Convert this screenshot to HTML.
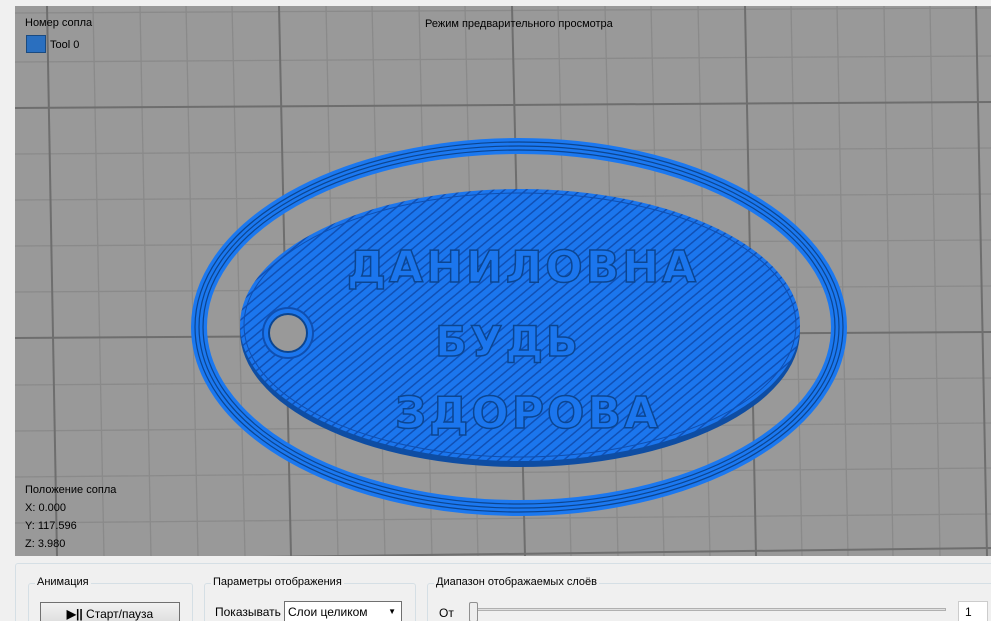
<!DOCTYPE html>
<html><head><meta charset="utf-8">
<style>
html,body{margin:0;width:991px;height:621px;overflow:hidden}
body{background:#f0f0f0;font-family:"Liberation Sans",sans-serif;font-size:11px;color:#000;position:relative}
.a{position:absolute}
.gb{position:absolute;border:1px solid #d5dfe5;border-radius:3px;}
.gt{position:absolute;background:#f0f0f0;padding:0 2px;top:-8px;left:6px;white-space:nowrap}
</style></head><body>
<svg class="a" style="left:15px;top:6px" width="976" height="550" viewBox="15 6 976 550">
<defs>
<pattern id="st" width="7" height="7" patternUnits="userSpaceOnUse" patternTransform="rotate(-40)">
<rect width="7" height="7" fill="#1b76ee"/><rect width="7" height="1.5" fill="#1050b5"/>
</pattern>
</defs>
<rect x="15" y="6" width="976" height="550" fill="#999999"/>
<g stroke="#8a8a8a" stroke-width="1.3">
<line x1="93" y1="6" x2="104" y2="556"/><line x1="140" y1="6" x2="151" y2="556"/><line x1="186" y1="6" x2="198" y2="556"/><line x1="232" y1="6" x2="245" y2="556"/>
<line x1="326" y1="6" x2="338" y2="556"/><line x1="372" y1="6" x2="385" y2="556"/><line x1="419" y1="6" x2="432" y2="556"/><line x1="465" y1="6" x2="478" y2="556"/>
<line x1="558" y1="6" x2="571" y2="556"/><line x1="605" y1="6" x2="618" y2="556"/><line x1="651" y1="6" x2="664" y2="556"/><line x1="698" y1="6" x2="710" y2="556"/>
<line x1="791" y1="6" x2="802" y2="556"/><line x1="837" y1="6" x2="848" y2="556"/><line x1="884" y1="6" x2="893" y2="556"/><line x1="930" y1="6" x2="940" y2="556"/>
<line x1="15" y1="13" x2="991" y2="8"/><line x1="15" y1="62" x2="991" y2="56"/><line x1="15" y1="154" x2="991" y2="148"/><line x1="15" y1="200" x2="991" y2="194"/><line x1="15" y1="246" x2="991" y2="240"/><line x1="15" y1="292" x2="991" y2="286"/><line x1="15" y1="385" x2="991" y2="378"/><line x1="15" y1="431" x2="991" y2="423"/><line x1="15" y1="477" x2="991" y2="468"/><line x1="15" y1="523" x2="991" y2="514"/>
</g>
<g stroke="#6e6e6e" stroke-width="2">
<line x1="47" y1="6" x2="57" y2="556"/><line x1="279" y1="6" x2="291" y2="556"/><line x1="512" y1="6" x2="525" y2="556"/><line x1="745" y1="6" x2="756" y2="556"/><line x1="976" y1="6" x2="987" y2="556"/>
<line x1="15" y1="108" x2="991" y2="102"/><line x1="15" y1="338" x2="991" y2="332"/><line x1="15" y1="560" x2="991" y2="548"/>
</g>
<ellipse cx="519" cy="327" rx="320" ry="181" fill="none" stroke="#1b78f0" stroke-width="16"/>
<g fill="none" stroke="#0c4590" stroke-width="1.2">
<ellipse cx="519" cy="327" rx="316" ry="177"/><ellipse cx="519" cy="327" rx="320" ry="181"/><ellipse cx="519" cy="327" rx="324" ry="185"/>
</g>
<ellipse cx="520" cy="331" rx="280" ry="136" fill="#0e4da3"/>
<ellipse cx="520" cy="325" rx="280" ry="136" fill="url(#st)"/>
<ellipse cx="520" cy="325" rx="276" ry="132" fill="none" stroke="#0f4fb0" stroke-width="1"/>
<circle cx="288" cy="333" r="25" fill="#1b76ee" stroke="#0f4fb0" stroke-width="2"/>
<circle cx="288" cy="333" r="19" fill="#999" stroke="#0c4590" stroke-width="2"/>
<g font-family="DejaVu Sans,sans-serif" font-weight="bold" fill="#1b76ee" stroke="#0c4590" stroke-width="1.5" text-anchor="middle">
<text x="523" y="282" font-size="44" letter-spacing="3">ДАНИЛОВНА</text>
<text x="508" y="356" font-size="42" letter-spacing="3">БУДЬ</text>
<text x="528" y="428" font-size="44" letter-spacing="3">ЗДОРОВА</text>
</g>
<g font-family="Liberation Sans,sans-serif" font-size="11" fill="#000">
<text x="25" y="26">Номер сопла</text>
<text x="50" y="48">Tool 0</text>
<text x="425" y="27">Режим предварительного просмотра</text>
<text x="25" y="493">Положение сопла</text>
<text x="25" y="511">X: 0.000</text>
<text x="25" y="529">Y: 117.596</text>
<text x="25" y="547">Z: 3.980</text>
</g>
<rect x="26.5" y="35.5" width="19" height="17" fill="#2a6fbf" stroke="#1a4a80"/>
</svg>
<div class="a" style="left:15px;top:563px;width:980px;height:70px;border:1px solid #d5dfe5;border-radius:3px"></div>
<div class="gb" style="left:28px;top:583px;width:163px;height:50px"><span class="gt">Анимация</span></div>
<div class="gb" style="left:204px;top:583px;width:210px;height:50px"><span class="gt">Параметры отображения</span></div>
<div class="gb" style="left:427px;top:583px;width:570px;height:50px"><span class="gt">Диапазон отображаемых слоёв</span></div>
<div class="a" style="left:40px;top:602px;width:138px;height:22px;border:1px solid #707070;background:linear-gradient(#f2f2f2,#dcdcdc);text-align:center;line-height:22px;font-size:12px"><b style="font-size:12px">▶||</b> Старт/пауза</div>
<div class="a" style="left:215px;top:605px;font-size:12px">Показывать</div>
<div class="a" style="left:284px;top:601px;width:118px;height:22px;border:1px solid #707070;background:#fff;font-size:12px;line-height:20px;padding-left:3px;box-sizing:border-box">Слои целиком<span style="position:absolute;right:5px;font-size:8px">▼</span></div>
<div class="a" style="left:439px;top:606px;font-size:12px">От</div>
<div class="a" style="left:476px;top:608px;width:470px;height:3px;background:#e0e0e0;border:1px solid #b0b0b0;box-sizing:border-box"></div>
<div class="a" style="left:469px;top:602px;width:7px;height:18px;border:1px solid #909090;background:#eee;border-radius:2px"></div>
<div class="a" style="left:958px;top:601px;width:30px;height:22px;border:1px solid #ccc;background:#fff;font-size:12px;line-height:20px;padding-left:6px;box-sizing:border-box">1</div>
</body></html>
